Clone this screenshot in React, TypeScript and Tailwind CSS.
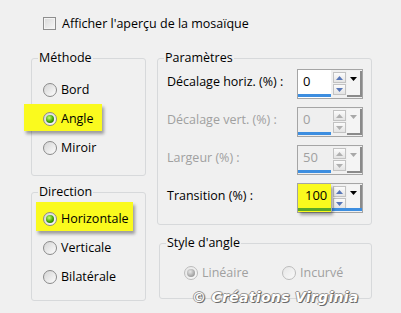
import React from "react";

function Radio({ checked = false, disabled = false }: { checked?: boolean; disabled?: boolean }) {
  return (
    <span
      className={`relative inline-flex shrink-0 w-[14px] h-[14px] rounded-full border items-center justify-center ${
        disabled
          ? "border-[#bcbcbc] bg-[linear-gradient(135deg,#e6e6e6,#fafafa)]"
          : "border-[#8a8a8a] bg-[linear-gradient(135deg,#d4d4d4,#fdfdfd)]"
      }`}
    >
      {checked && (
        <span
          className={`w-[8px] h-[8px] rounded-full ${
            disabled
              ? "bg-[radial-gradient(circle_at_40%_35%,#e8e8e8,#a8a8a8_60%,#8a8a8a)]"
              : "bg-[radial-gradient(circle_at_40%_35%,#c8ff7a,#3fa300_55%,#1d5c00)]"
          }`}
        />
      )}
    </span>
  );
}

function RadioRow({
  label,
  checked,
  disabled,
  hl,
}: {
  label: string;
  checked?: boolean;
  disabled?: boolean;
  hl?: string;
}) {
  return (
    <div className="relative flex items-center h-[14px]">
      {hl && <span className={`absolute bg-[#fafa1e] shadow-[2px_3px_3px_rgba(0,0,0,0.35)] ${hl}`} />}
      <span className="relative flex items-center">
        <Radio checked={checked} disabled={disabled} />
        <span className={`ml-[4px] leading-[14px] ${disabled ? "text-[#a0a0a0]" : "text-black"}`}>{label}</span>
      </span>
    </div>
  );
}

function Group({ title, className, children }: { title: string; className: string; children: React.ReactNode }) {
  return (
    <div className={`relative border border-[#d7d9db] rounded-[3px] ${className}`}>
      <span className="absolute left-[6px] top-[-9px] px-[1px] bg-[#f0f0f0] leading-[16px]">{title}</span>
      {children}
    </div>
  );
}

function Tri({ dir, color }: { dir: "up" | "down"; color: string }) {
  return (
    <svg width="7" height="4" viewBox="0 0 7 4">
      {dir === "up" ? <polygon points="0,4 7,4 3.5,0" fill={color} /> : <polygon points="0,0 7,0 3.5,4" fill={color} />}
    </svg>
  );
}

function Spin({ value, disabled = false, highlight = false }: { value: string; disabled?: boolean; highlight?: boolean }) {
  const arrow = disabled ? "#b0b0b0" : "#5877b8";
  return (
    <div className="relative w-[66px] h-[30px] border border-[#a5a5a5] bg-[#f0f0f0] flex">
      <div
        className={`relative w-[33px] h-full flex flex-col ${
          highlight ? "bg-[#fafa1e] shadow-[2px_3px_3px_rgba(0,0,0,0.35)] z-10" : disabled ? "bg-[#efefef]" : "bg-white"
        }`}
      >
        <div
          className={`flex-1 flex items-center pl-[5px] ${
            highlight ? "text-[13px] text-black pl-[7px]" : disabled ? "text-[#a0a0a0] text-[13px]" : "text-black text-[13px]"
          }`}
        >
          {value}
        </div>
        <div className={`h-[3px] mb-[1px] w-full ${highlight ? "bg-[#5aa82a]" : "bg-[#3d8ee0]"}`} />
      </div>
      <div className="flex flex-col ml-[2px] mt-[2px] gap-[1px]">
        <div className="w-[13px] h-[11px] border border-[#c2c2c2] bg-[linear-gradient(#fbfbfb,#e4e4e4)] flex items-center justify-center">
          <Tri dir="up" color={arrow} />
        </div>
        <div className="w-[13px] h-[11px] border border-[#c2c2c2] bg-[linear-gradient(#fbfbfb,#e4e4e4)] flex items-center justify-center">
          <Tri dir="down" color={arrow} />
        </div>
      </div>
      <div className="ml-[1px] mt-[1px] w-[15px] h-[26px] border-r-[2px] border-b-[2px] border-[#8a8a8a] bg-[#f4f4f4] flex justify-center pt-[6px]">
        <Tri dir="down" color={disabled ? "#a8a8a8" : "#000"} />
      </div>
      {highlight && <div className="absolute left-[34px] bottom-[1px] w-[30px] h-[3px] bg-[#3d8ee0]" />}
    </div>
  );
}

function ParamRow({ label, value, disabled, highlight }: { label: string; value: string; disabled?: boolean; highlight?: boolean }) {
  return (
    <div className="flex items-center justify-between h-[30px]">
      <span className={`-mt-[3px] ${disabled ? "text-[#a0a0a0]" : "text-black"}`}>{label}</span>
      <Spin value={value} disabled={disabled} highlight={highlight} />
    </div>
  );
}

export default function App() {
  return (
    <div className="relative w-[401px] h-[313px] overflow-hidden bg-[#f0f0f0] text-[12.5px] text-black font-['Open_Sans','Noto_Sans',sans-serif]">
      <div className="flex items-center pt-[17px] pl-[43px] h-[30px]">
        <span className="w-[13px] h-[13px] border border-[#8e8e8e] bg-[linear-gradient(135deg,#d9d9d9,#f7f7f7)] shadow-[inset_0_0_0_1px_#f4f4f4]" />
        <span className="ml-[6px] leading-[13px]">Afficher l'aperçu de la mosaïque</span>
      </div>

      <div className="flex mt-[28px] pl-[31px]">
        <div className="flex flex-col w-[115px] gap-[16px]">
          <Group title="Méthode" className="h-[118px] pt-[24px] pl-[11px]">
            <div className="flex flex-col gap-[15px]">
              <RadioRow label="Bord" />
              <RadioRow label="Angle" checked hl="left-[-19px] top-[-8px] w-[78px] h-[27px]" />
              <RadioRow label="Miroir" />
            </div>
          </Group>
          <Group title="Direction" className="h-[109px] pt-[19px] pl-[11px]">
            <div className="flex flex-col gap-[15px]">
              <RadioRow label="Horizontale" checked hl="left-[-7px] top-[-10px] w-[97px] h-[29px]" />
              <RadioRow label="Verticale" />
              <RadioRow label="Bilatérale" />
            </div>
          </Group>
        </div>

        <div className="flex flex-col ml-[11px] w-[215px] gap-[18px]">
          <Group title="Paramètres" className="h-[167px] pt-[10px] pl-[9px] pr-[8px]">
            <div className="flex flex-col gap-[8px]">
              <ParamRow label="Décalage horiz. (%) :" value="0" />
              <ParamRow label="Décalage vert. (%) :" value="0" disabled />
              <ParamRow label="Largeur (%) :" value="50" disabled />
              <ParamRow label="Transition (%) :" value="100" highlight />
            </div>
          </Group>
          <Group title="Style d'angle" className="ml-[2px] w-[213px] h-[56px] pt-[22px] pl-[24px]">
            <div className="flex items-center">
              <div className="w-[98px]">
                <RadioRow label="Linéaire" checked disabled />
              </div>
              <RadioRow label="Incurvé" disabled />
            </div>
          </Group>
        </div>
      </div>

      <div className="absolute left-[192px] top-[287px] text-[14px] font-bold italic tracking-[0.3px] text-white font-['DejaVu_Sans',sans-serif] [text-shadow:1px_1px_0_#6a6a6a,-1px_0_0_#9a9a9a,0_-1px_0_#9a9a9a,1px_0_1px_#777]">
        © Créations Virginia
      </div>
    </div>
  );
}
